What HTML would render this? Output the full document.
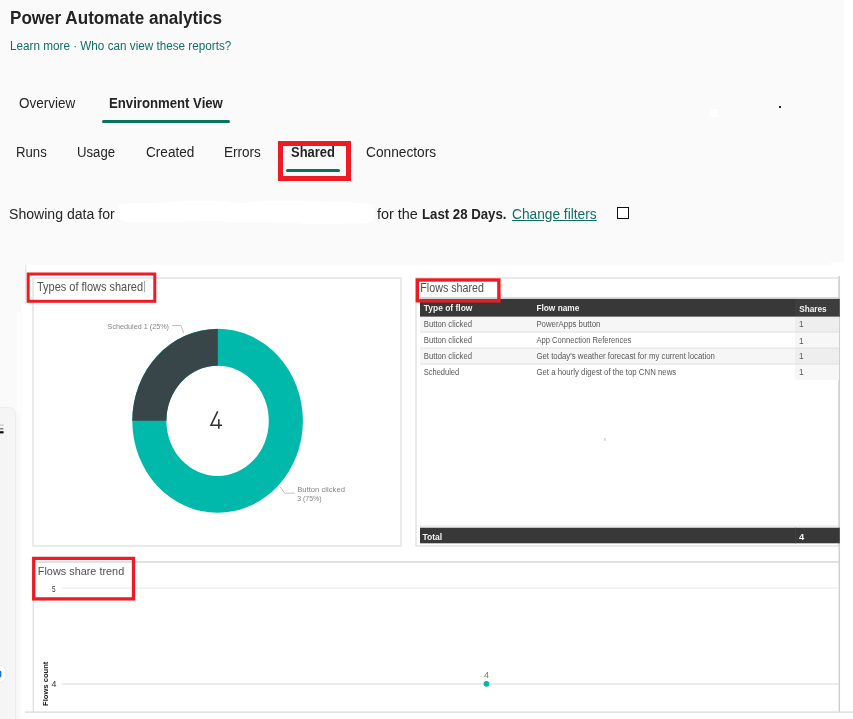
<!DOCTYPE html>
<html><head><meta charset="utf-8">
<style>
html,body{margin:0;padding:0;}
body{width:853px;height:719px;overflow:hidden;background:#fafafa;font-family:"Liberation Sans",sans-serif;position:relative;color:#242424;}
.a{position:absolute;}
.t{position:absolute;white-space:nowrap;line-height:1;transform-origin:0 0;}
.b{font-weight:bold;}
.lk{color:#0f6f64;}
</style></head><body>
<!-- right white strip -->
<div class="a" style="left:844.4px;top:0;width:9px;height:266px;background:#fff"></div>
<div class="a" style="left:831px;top:261.5px;width:14px;height:4px;background:#fff"></div>

<div class="a" style="left:710px;top:109px;width:8px;height:8px;background:#fff"></div>
<div class="a" style="left:779.2px;top:106.1px;width:2px;height:2px;background:#222"></div>
<!-- header -->
<span class="t b" id="h1" style="left:9.8px;top:9.0px;font-size:18px;transform:scaleX(0.949);color:#242424;">Power Automate analytics</span>
<span class="t lk" id="lk" style="left:9.7px;top:40.0px;font-size:12px;transform:scaleX(0.976);">Learn more · Who can view these reports?</span>

<!-- tabs 1 -->
<span class="t" id="t1" style="left:18.6px;top:95.6px;font-size:14px;transform:scaleX(0.963);">Overview</span>
<span class="t b" id="t2" style="left:109.0px;top:95.6px;font-size:14px;transform:scaleX(0.94);">Environment View</span>
<div class="a" style="left:102px;top:120px;width:128px;height:3px;border-radius:2px;background:#06755b"></div>

<!-- tabs 2 -->
<span class="t" id="s1" style="left:16.2px;top:144.5px;font-size:14px;transform:scaleX(0.94);">Runs</span>
<span class="t" id="s2" style="left:76.5px;top:144.5px;font-size:14px;transform:scaleX(0.94);">Usage</span>
<span class="t" id="s3" style="left:146.0px;top:144.5px;font-size:14px;transform:scaleX(0.971);">Created</span>
<span class="t" id="s4" style="left:224.4px;top:144.5px;font-size:14px;transform:scaleX(0.968);">Errors</span>
<span class="t b" id="s5" style="left:290.8px;top:144.5px;font-size:14px;transform:scaleX(0.925);">Shared</span>
<span class="t" id="s6" style="left:366.4px;top:144.5px;font-size:14px;transform:scaleX(0.98);">Connectors</span>
<div class="a" style="left:286px;top:169px;width:54px;height:3px;border-radius:2px;background:#06755b"></div>
<div class="a" style="left:278px;top:141px;width:63px;height:30px;border:5px solid #ed1c24;"></div>

<!-- filter line -->
<span class="t" id="f1" style="left:9.4px;top:206.7px;font-size:14px;transform:scaleX(1.006);">Showing data for</span>
<svg class="a" style="left:0;top:190px" width="853" height="50" viewBox="0 190 853 50"><path d="M118,207 Q118,204 124,203.5 L160,203 Q175,200.5 200,200.5 L225,201 Q240,204 250,202 Q262,200.5 290,200.5 L330,201.5 Q360,202 372,204.5 L374,210 L374,219 Q372,223 362,223.5 L310,224 Q300,224 296,223 L232,222.5 Q226,221 222,221 L140,222.5 Q120,222 118,218 Z" fill="#fff"/></svg>
<span class="t" id="f2" style="left:377.2px;top:206.7px;font-size:14px;transform:scaleX(1.03);">for the</span>
<span class="t b" id="f3" style="left:422.3px;top:206.7px;font-size:14px;transform:scaleX(0.944);">Last 28 Days.</span>
<span class="t lk" id="f4" style="left:512.2px;top:206.7px;font-size:14px;transform:scaleX(0.98);text-decoration:underline;">Change filters</span>
<div class="a" style="left:617px;top:207px;width:10px;height:10px;border:1.5px solid #111;background:#fff"></div>

<!-- report white area -->
<div class="a" id="rep" style="left:26px;top:265px;width:827px;height:454px;background:#fff"></div>

<!-- left side panel -->
<div class="a" style="left:21px;top:304px;width:6px;height:415px;background:#fff"></div>
<div class="a" style="left:17px;top:312px;width:5px;height:407px;background:#fdfdfd"></div>
<div class="a" style="left:-2px;top:406.5px;width:16.4px;height:320px;background:#f5f5f5;border:1px solid #ececec;border-radius:0 7px 0 0;"></div>
<div class="a" style="left:16.4px;top:413px;width:5px;height:306px;background:linear-gradient(90deg,#f6f6f6,#fdfdfd)"></div>
<svg class="a" id="report" style="left:0;top:0" width="853" height="719" viewBox="0 0 853 719" font-family="Liberation Sans, sans-serif">
<defs><filter id="bl" filterUnits="userSpaceOnUse" x="0" y="0" width="853" height="719"><feGaussianBlur stdDeviation="0.45"/></filter></defs>
<g id="cards" fill="none" stroke="#dadede" stroke-width="1.2">
  <line x1="25.7" y1="265" x2="25.7" y2="304" stroke="#e4e4e4"/>
  <rect x="33" y="278" width="368" height="268"/>
  <rect x="416" y="278" width="423" height="268"/>
  <line x1="33" y1="562" x2="839" y2="562" stroke="#d6dada" stroke-width="1.5"/>
  <line x1="33.3" y1="562" x2="33.3" y2="712"/>
  <line x1="839.3" y1="276" x2="839.3" y2="712" stroke="#d0d0d0" stroke-width="1.5"/>
  <line x1="25" y1="712.2" x2="853" y2="712.2" stroke="#d8d8d8"/>
</g>
<g id="donut">
  <path fill-rule="evenodd" fill="#01b9aa" d="M132.3,420.85 A85.3,91.95 0 1 1 302.9,420.85 A85.3,91.95 0 1 1 132.3,420.85 Z M166.39999999999998,420.85 A51.2,55.1 0 1 0 268.8,420.85 A51.2,55.1 0 1 0 166.39999999999998,420.85 Z"/>
  <path fill="#384649" d="M217.79999999999998,328.90000000000003 A85.3,91.95 0 0 0 132.3,420.65000000000003 L166.39999999999998,420.65000000000003 A51.2,55.1 0 0 1 217.79999999999998,365.75 Z"/>
</g>
<g id="dlabels" filter="url(#bl)">
  <path d="M217.7,411.4 L211,425.2 H222 M218.8,419.2 V428.7" fill="none" stroke="#333" stroke-width="1.6"/>
  <path d="M172,325.5 H181 L183.6,333" fill="none" stroke="#c2c2c2" stroke-width="1"/>
  <path d="M280,486.5 L284.7,493.2 H294.6" fill="none" stroke="#c2c2c2" stroke-width="1"/>
  <text id="dl1" x="107.6" y="329" font-size="8" fill="#858585" textLength="61.4" lengthAdjust="spacingAndGlyphs">Scheduled 1 (25%)</text>
  <text id="dl2" x="297.2" y="492.2" font-size="8" fill="#858585" textLength="47.8" lengthAdjust="spacingAndGlyphs">Button clicked</text>
  <text id="dl3" x="297.2" y="500.6" font-size="8" fill="#858585" textLength="24.4" lengthAdjust="spacingAndGlyphs">3 (75%)</text>
</g>
<g id="titles" filter="url(#bl)" fill="#505050">
  <text id="ct1" x="37" y="291" font-size="12.2" textLength="106" lengthAdjust="spacingAndGlyphs">Types of flows shared</text>
  <rect x="144.2" y="281" width="0.9" height="11" fill="#999"/>
  <text id="ct2" x="420.3" y="292" font-size="12.2" textLength="63.7" lengthAdjust="spacingAndGlyphs">Flows shared</text>
  <text id="ct3" x="37.8" y="575" font-size="11.4" textLength="86.4" lengthAdjust="spacingAndGlyphs">Flows share trend</text>
</g>
<g id="table" filter="url(#bl)">
  <rect x="420" y="297" width="419" height="1.2" fill="#d8d8d8"/>
  <rect x="420" y="298.8" width="375" height="18" fill="#383838"/>
  <rect x="795" y="298.8" width="44.8" height="18" fill="#3d3d3d"/>
  <rect x="420" y="316.8" width="375" height="15.2" fill="#f6f6f6"/>
  <rect x="795" y="316.8" width="44" height="15.2" fill="#eeeeee"/>
  <rect x="795" y="332" width="44" height="16" fill="#f7f7f7"/>
  <rect x="420" y="348" width="375" height="16" fill="#f6f6f6"/>
  <rect x="795" y="348" width="44" height="16" fill="#eeeeee"/>
  <rect x="795" y="364" width="44" height="16" fill="#f7f7f7"/>
  <g fill="#dedede">
    <rect x="420" y="331.6" width="419" height="0.9"/>
    <rect x="420" y="347.6" width="419" height="0.9"/>
    <rect x="420" y="363.6" width="419" height="0.9"/>
  </g>
  <g font-size="9.4" font-weight="bold" fill="#f4f4f4">
    <text x="423.8" y="311.2" textLength="48.6" lengthAdjust="spacingAndGlyphs">Type of flow</text>
    <text x="536.4" y="311.3" textLength="43" lengthAdjust="spacingAndGlyphs">Flow name</text>
    <text x="799.2" y="312" textLength="27.4" lengthAdjust="spacingAndGlyphs">Shares</text>
  </g>
  <g font-size="8.3" fill="#585858">
    <text x="423.8" y="327.2" textLength="48.2" lengthAdjust="spacingAndGlyphs">Button clicked</text>
    <text x="423.8" y="343.3" textLength="48.2" lengthAdjust="spacingAndGlyphs">Button clicked</text>
    <text x="423.8" y="359" textLength="48.2" lengthAdjust="spacingAndGlyphs">Button clicked</text>
    <text x="423.8" y="375.2" textLength="35.4" lengthAdjust="spacingAndGlyphs">Scheduled</text>
    <text x="536.4" y="327.2" textLength="64" lengthAdjust="spacingAndGlyphs">PowerApps button</text>
    <text x="536.4" y="343.3" textLength="95" lengthAdjust="spacingAndGlyphs">App Connection References</text>
    <text x="536.4" y="359" textLength="178.5" lengthAdjust="spacingAndGlyphs">Get today's weather forecast for my current location</text>
    <text x="536.4" y="375.2" textLength="139.8" lengthAdjust="spacingAndGlyphs">Get a hourly digest of the top CNN news</text>
    <text x="799" y="327.2">1</text>
    <text x="799" y="343.6">1</text>
    <text x="799" y="359">1</text>
    <text x="799" y="375.2">1</text>
  </g>
  <rect x="604" y="438" width="1.6" height="3" fill="#d4d4d4"/>
  <rect x="420" y="525.6" width="419" height="1" fill="#dedede"/>
  <rect x="420" y="527.7" width="419.8" height="15.6" fill="#383838"/><rect x="795" y="527.7" width="0.8" height="15.6" fill="#444"/>
  <g font-size="9.4" font-weight="bold" fill="#f4f4f4">
    <text x="422.4" y="540.3" textLength="19.8" lengthAdjust="spacingAndGlyphs">Total</text>
    <text x="799" y="540.3">4</text>
  </g>
</g>
<g id="trend" filter="url(#bl)">
  <line x1="62" y1="588.1" x2="839" y2="588.1" stroke="#ececec" stroke-width="1.2"/>
  <line x1="62" y1="684" x2="839" y2="684" stroke="#e6e6e6" stroke-width="1.3"/>
  <text x="51.9" y="591.7" font-size="8.6" fill="#3a3a3a" textLength="3.6" lengthAdjust="spacingAndGlyphs">5</text>
  <text x="51.6" y="687.3" font-size="8.8" fill="#333">4</text>
  <text transform="translate(48,706) rotate(-90)" font-size="6.8" font-weight="bold" fill="#222" textLength="44.4" lengthAdjust="spacingAndGlyphs">Flows count</text>
  <circle cx="486.5" cy="683.8" r="2.9" fill="#01b8aa"/>
  <text x="483.9" y="677.8" font-size="9" fill="#777">4</text>
</g>
<g id="leftbits">
  <rect x="0" y="424.6" width="3.6" height="1" fill="#bbb"/>
  <rect x="0" y="428.2" width="3.4" height="1.2" fill="#666"/>
  <rect x="0" y="431.2" width="3.6" height="2.2" fill="#111"/>
  <circle cx="-3.3" cy="673.8" r="9.6" fill="#fff" stroke="#e6e6e6" stroke-width="0.8"/>
  <rect x="-1" y="670.7" width="2.3" height="6.6" rx="1" fill="#1570d0"/>
</g>
<g id="red" fill="none" stroke="#ed1c24" stroke-width="3">
  <rect x="28.2" y="274" width="126.6" height="27.3"/>
  <rect x="417.3" y="280" width="81.6" height="20.8" stroke-width="3.4"/>
  <rect x="33.7" y="558.4" width="99.8" height="40.5" stroke-width="3.3"/>
</g>
</svg>
</body></html>
